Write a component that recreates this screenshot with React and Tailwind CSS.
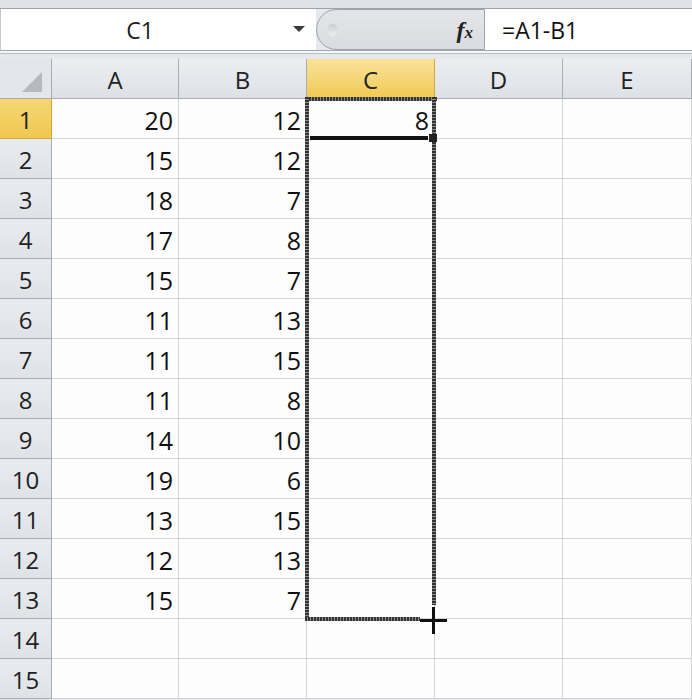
const colsA = [20, 15, 18, 17, 15, 11, 11, 11, 14, 19, 13, 12, 15];
const colsB = [12, 12, 7, 8, 7, 13, 15, 8, 10, 6, 15, 13, 7];
const letters = ["A", "B", "C", "D", "E"];

function Corner() {
  return (
    <div className="h-full bg-[#e3e6ea] border-r border-b border-[#a9adb3] relative">
      <svg width="52" height="40" className="absolute left-0 top-0">
        <polygon points="22,33 42,13 42,33" fill="#b6bac0" />
      </svg>
    </div>
  );
}

function ColHeader({ label }) {
  const active = label === "C";
  return (
    <div
      className={
        active
          ? "h-full flex items-center justify-center border-r border-b border-[#d7a43d] bg-gradient-to-b from-[#f9e39a] to-[#f1c94f] text-[#222]"
          : "h-full flex items-center justify-center border-r border-b border-[#a9adb3] bg-gradient-to-b from-[#eceef1] to-[#dde1e6] text-[#222]"
      }
    >
      <span className="text-[24px] leading-none pt-[2px]">{label}</span>
    </div>
  );
}

function RowHeader({ n }) {
  const active = n === 1;
  return (
    <div
      className={
        active
          ? "h-full flex items-center justify-center border-r border-b border-[#d7a43d] bg-gradient-to-b from-[#f6d775] to-[#f0c84e] text-[#222]"
          : "h-full flex items-center justify-center border-r border-b border-[#a9adb3] bg-gradient-to-b from-[#e8ebef] to-[#dfe2e7] text-[#222]"
      }
    >
      <span className="text-[24px] leading-none pt-[2px]">{n}</span>
    </div>
  );
}

function Cell({ value }) {
  return (
    <div className="h-full flex items-center justify-end pr-[5px] border-r border-b border-[#d3d4d6] bg-[#fdfdfd] text-[#111]">
      <span className="text-[25px] leading-none pt-[3px]">{value}</span>
    </div>
  );
}

export default function App() {
  const rows = Array.from({ length: 15 }, (_, i) => i + 1);

  return (
    <div
      className="w-[692px] h-[700px] overflow-hidden bg-[#e6e8eb]"
      style={{ fontFamily: '"Open Sans", "Noto Sans", sans-serif' }}
    >
      {/* formula bar */}
      <div className="h-[9px] bg-[#dfe2e6] border-b border-[#9fa4ab]" />
      <div className="flex h-[41px]">
        <div className="w-[316px] bg-white flex items-center border-l border-[#c4c7cc]">
          <div className="w-[278px] text-center text-[23px] text-[#222] pt-[2px]">C1</div>
          <svg width="12" height="7" className="ml-[14px]">
            <polygon points="0,0 12,0 6,6" fill="#3a3a3a" />
          </svg>
        </div>
        <div className="w-[169px] bg-gradient-to-b from-[#e4e6e9] to-[#d9dce0] border border-[#9ea3a9] rounded-l-[22px] flex items-center relative">
          <div className="ml-[11px] w-[9px] h-[12px] rounded-full bg-gradient-to-b from-[#c9ccd0] to-[#eef0f2]" />
          <span
            className="ml-auto mr-[11px] text-[24px] italic font-bold text-[#222] leading-none"
            style={{ fontFamily: '"Liberation Serif", serif' }}
          >
            f<span className="text-[17px]">x</span>
          </span>
        </div>
        <div className="flex-1 bg-white flex items-center pl-[17px] text-[23px] text-[#111] pt-[2px]">
          =A1-B1
        </div>
      </div>
      <div className="h-[9px] border-t border-[#a3a8ae] bg-[#e6e8eb]">
        <div className="h-[2px] bg-[#f5f6f7]" />
        <div className="h-px bg-[#b9bdc2]" />
      </div>

      {/* sheet */}
      <div className="relative">
        <div className="grid grid-cols-[52px_127px_128px_128px_128px_129px] grid-rows-[40px_repeat(15,40px)]">
          <Corner />
          {letters.map((l) => (
            <ColHeader key={l} label={l} />
          ))}
          {rows.map((r) => (
            <div key={r} className="contents">
              <RowHeader n={r} />
              <Cell value={r <= 13 ? colsA[r - 1] : ""} />
              <Cell value={r <= 13 ? colsB[r - 1] : ""} />
              <Cell value={r === 1 ? 8 : ""} />
              <Cell value="" />
              <Cell value="" />
            </div>
          ))}
        </div>

        {/* copy selection (marching ants) */}
        <div className="absolute left-[306px] top-[38px] w-[131px] h-[4px] bg-[repeating-linear-gradient(90deg,#333_0_2px,#8c8c8c_2px_3px)]" />
        <div className="absolute left-[305px] top-[38px] w-[4px] h-[524px] bg-[repeating-linear-gradient(180deg,#333_0_2px,#8c8c8c_2px_3px)]" />
        <div className="absolute left-[432px] top-[38px] w-[4px] h-[508px] bg-[repeating-linear-gradient(180deg,#333_0_2px,#8c8c8c_2px_3px)]" />
        <div className="absolute left-[305px] top-[558px] w-[115px] h-[4px] bg-[repeating-linear-gradient(90deg,#333_0_2px,#8c8c8c_2px_3px)]" />

        {/* active cell bottom edge + fill handle */}
        <div className="absolute left-[310px] top-[77px] w-[118px] h-[4px] bg-[#111]" />
        <div className="absolute left-[429px] top-[75px] w-[8px] h-[8px] bg-[#222]" />

        {/* fill cursor */}
        <div className="absolute left-[420px] top-[560px] w-[27px] h-[3px] bg-[#111]" />
        <div className="absolute left-[432px] top-[548px] w-[3px] h-[27px] bg-[#111]" />
      </div>
    </div>
  );
}
